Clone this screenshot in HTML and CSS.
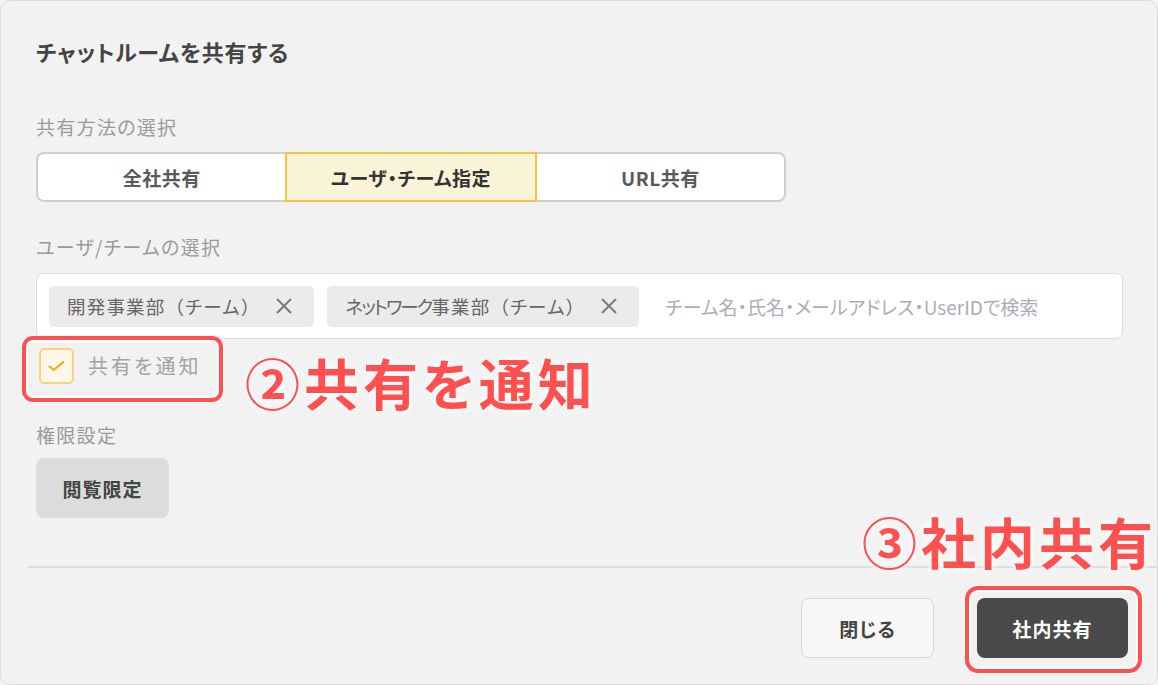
FILE: index.html
```html
<!DOCTYPE html>
<html lang="ja">
<head>
<meta charset="utf-8">
<title>チャットルームを共有する</title>
<link rel="stylesheet" href="styles.css">
</head>
<body>
<div class="dialog">
  <div class="body">
    <h1 class="title">チャットルームを共有する</h1>

    <div class="label label-method">共有方法の選択</div>
    <div class="segments">
      <div class="seg seg-first">全社共有</div>
      <div class="seg seg-active">ユーザ・チーム指定</div>
      <div class="seg seg-last">URL共有</div>
    </div>

    <div class="label label-users">ユーザ/チームの選択</div>
    <div class="picker">
      <div class="chip"><span class="chip-text">開発事業部<span class="paren">（</span>チーム<span class="paren">）</span></span>
        <svg class="chip-x" width="18" height="18" viewBox="0 0 18 18"><path d="M2 2L16 16M16 2L2 16" stroke="#7a7a7a" stroke-width="2" fill="none"/></svg>
      </div>
      <div class="chip"><span class="chip-text"><span class="kana">ネットワーク</span>事業部<span class="paren">（</span>チーム<span class="paren">）</span></span>
        <svg class="chip-x" width="18" height="18" viewBox="0 0 18 18"><path d="M2 2L16 16M16 2L2 16" stroke="#7a7a7a" stroke-width="2" fill="none"/></svg>
      </div>
      <span class="placeholder">チーム名・氏名・メールアドレス・UserIDで検索</span>
    </div>

    <div class="notify">
      <span class="checkbox">
        <svg width="34" height="34" viewBox="0 0 34 34"><path d="M9.5 17.5L14 21.5L24.5 12.5" stroke="#f2a900" stroke-width="2.2" fill="none" stroke-linecap="round" stroke-linejoin="round"/></svg>
      </span>
      <span class="notify-text">共有を通知</span>
    </div>

    <div class="label label-perm">権限設定</div>
    <div class="perm-btn">閲覧限定</div>
  </div>

  <div class="divider"></div>

  <div class="footer">
    <div class="btn btn-close">閉じる</div>
    <div class="btn btn-share">社内共有</div>
  </div>

  <div class="mark mark-notify"></div>
  <div class="anno anno-notify">②共有を通知</div>
  <div class="mark mark-share"></div>
  <div class="anno anno-share">③社内共有</div>
</div>
</body>
</html>
```

FILE: styles.css
```css
* { box-sizing: border-box; }
html, body {
  margin: 0;
  padding: 0;
  background: #f2f2f2;
}
body {
  font-family: "Noto Sans CJK JP", "Noto Sans", sans-serif;
  font-feature-settings: "palt";
  color: #333;
}
.dialog {
  position: relative;
  width: 1158px;
  height: 685px;
  background: #f2f2f2;
  border: 1px solid #dcdcdc;
  border-radius: 10px;
  overflow: hidden;
}
.body {
  display: flex;
  flex-direction: column;
  align-items: flex-start;
  padding: 35px 0 0 35px;
}
.title {
  margin: 0;
  font-size: 22px;
  line-height: 30px;
  font-weight: 700;
  color: #444;
  letter-spacing: 0.8px;
}
.label {
  font-size: 19px;
  line-height: 28px;
  color: #9a9a9a;
  letter-spacing: 1.3px;
}
.label-method { margin-top: 47px; }
.segments {
  display: flex;
  margin-top: 11px;
  width: 750px;
  height: 50px;
}
.seg {
  flex: 1;
  display: flex;
  align-items: center;
  justify-content: center;
  background: #fff;
  border: 2px solid #cfcfcf;
  font-size: 19px;
  font-weight: 700;
  color: #5a5a5a;
  letter-spacing: 0.5px;
}
.seg-first {
  border-radius: 8px 0 0 8px;
  border-right: none;
}
.seg-active {
  background: #fbf3d7;
  border-color: #f7c23c;
  color: #333;
}
.seg-last {
  border-radius: 0 8px 8px 0;
  border-left: none;
}
.label-users { margin-top: 31px; }
.picker {
  margin-top: 12px;
  width: 1087px;
  height: 66px;
  background: #fff;
  border: 1.5px solid #dadada;
  border-radius: 7px;
  display: flex;
  align-items: center;
  gap: 13px;
  padding: 0 12px;
}
.chip {
  height: 41px;
  display: flex;
  align-items: center;
  gap: 15px;
  padding: 0 21px 0 18px;
  background: #ebebeb;
  border-radius: 5px;
  font-size: 18.5px;
  color: #666;
  letter-spacing: 1.2px;
}
.paren { font-feature-settings: normal; }
.kana { letter-spacing: -2px; }
.chip-x { flex: none; }
.placeholder {
  margin-left: 13px;
  font-size: 19px;
  color: #a9aeb8;
  letter-spacing: 0;
}
.notify {
  display: flex;
  align-items: center;
  gap: 14px;
  margin-top: 9px;
  margin-left: 3px;
}
.checkbox {
  width: 35px;
  height: 36px;
  border: 2px solid #f8d37c;
  border-radius: 5px;
  background: #fdf8ea;
  display: flex;
  align-items: center;
  justify-content: center;
}
.checkbox svg { display: block; }
.notify-text {
  font-size: 20px;
  line-height: 28px;
  color: #a3a3a3;
  letter-spacing: 3px;
}
.label-perm { margin-top: 37px; }
.perm-btn {
  margin-top: 9px;
  width: 133px;
  height: 60px;
  display: flex;
  align-items: center;
  justify-content: center;
  background: #dcdcdc;
  border-radius: 8px;
  font-size: 19px;
  font-weight: 700;
  color: #444;
  letter-spacing: 1px;
}
.divider {
  margin: 48px 0 0 27px;
  height: 2px;
  background: #dcdde2;
}
.footer {
  display: flex;
  justify-content: flex-end;
  gap: 43px;
  margin-top: 30px;
  padding-right: 29px;
}
.btn {
  height: 60px;
  display: flex;
  align-items: center;
  justify-content: center;
  border-radius: 8px;
  font-size: 19px;
  font-weight: 700;
  letter-spacing: 1px;
}
.btn-close {
  width: 133px;
  background: #f7f7f7;
  border: 1.5px solid #d8d8d8;
  color: #444;
}
.btn-share {
  width: 151px;
  background: #4a4a4a;
  color: #fff;
}
.mark {
  position: absolute;
  border: 4px solid #ff5050;
  box-shadow: inset 0 0 0 2px #fff, 0 0 0 1px rgba(255,255,255,0.8);
}
.mark-notify {
  left: 21px;
  top: 335px;
  width: 201px;
  height: 66px;
  border-radius: 11px;
}
.mark-share {
  left: 964px;
  top: 585px;
  width: 177px;
  height: 87px;
  border-radius: 13px;
}
.anno {
  position: absolute;
  font-size: 55px;
  line-height: 60px;
  font-weight: 700;
  color: #ff5050;
  letter-spacing: 4px;
  text-shadow: 0 0 3px #fff, 0 0 5px #fff, 0 0 8px #fff;
  white-space: nowrap;
}
.anno-notify {
  left: 244px;
  top: 350px;
}
.anno-share {
  left: 861px;
  top: 509px;
}
```
